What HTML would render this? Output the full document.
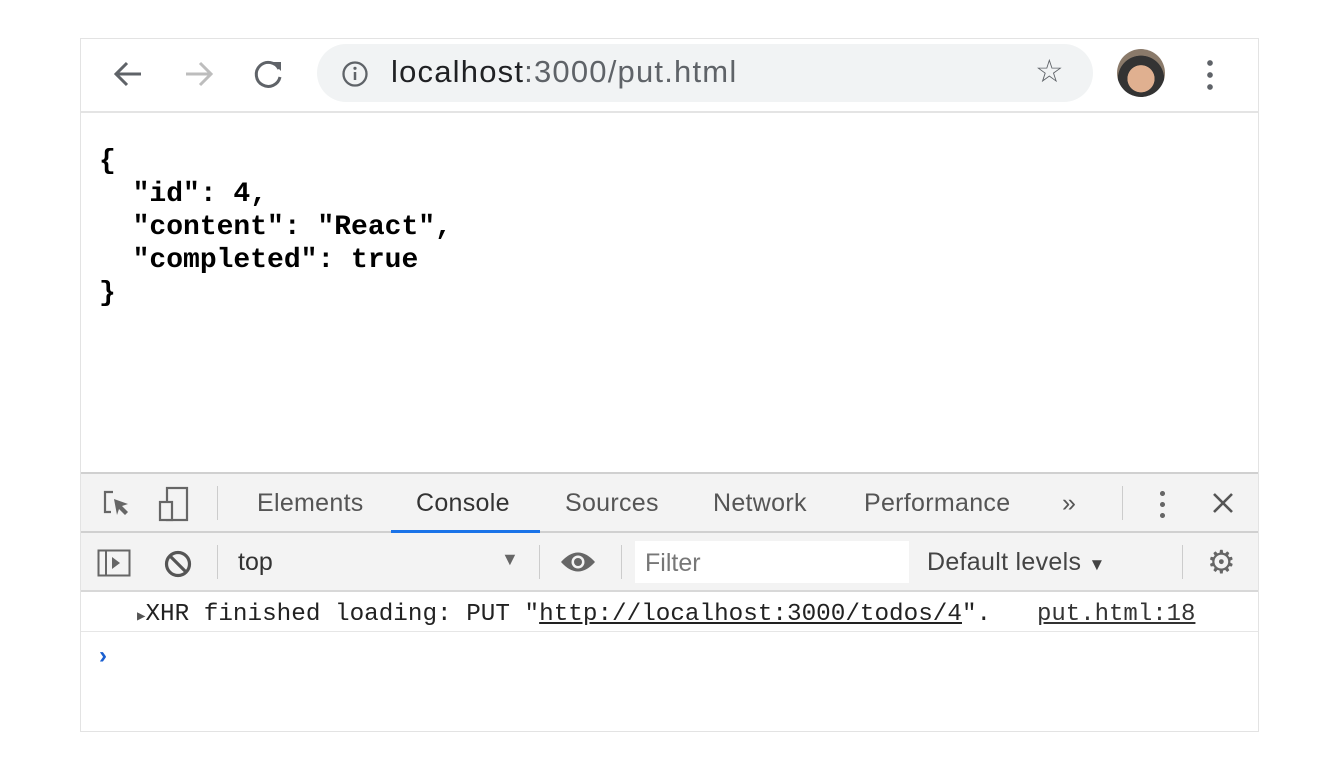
<!DOCTYPE html>
<html><head><style>
*{margin:0;padding:0;box-sizing:border-box}
body{width:1335px;height:763px;background:#fff;position:relative;font-family:"Liberation Sans",sans-serif;overflow:hidden}
.frame{position:absolute;left:80px;top:38px;width:1179px;height:694px;border:1px solid #e3e3e3}
.abs{position:absolute}
.tb{left:0;top:0;width:1177px;height:74px;border-bottom:2px solid #e4e4e4;background:#fff}
.url{left:236px;top:5px;width:776px;height:58px;border-radius:29px;background:#f1f3f4}
.mono{font-family:"Liberation Mono",monospace}
.dt{left:0;top:433px;width:1177px;height:259px;border-top:2px solid #d0d0d0}
.tabs{left:0;top:0;width:1177px;height:59px;background:#f3f3f3;border-bottom:2px solid #d0d0d0}
.tab{top:15px;font-size:25px;color:#555;letter-spacing:0.3px}
.bar2{left:0;top:59px;width:1177px;height:59px;background:#f3f3f3;border-bottom:2px solid #d8d8d8}
.sep{width:1px;background:#ccc}
</style></head><body>
<div class="frame">
 <div class="abs tb">
  <svg class="abs" style="left:30px;top:18px" width="34" height="34" viewBox="0 0 34 34"><path d="M30 17H6M16 6L5 17l11 11" stroke="#5f6368" stroke-width="3" fill="none"/></svg>
  <svg class="abs" style="left:101px;top:18px" width="34" height="34" viewBox="0 0 34 34"><path d="M4 17h24M18 6l11 11-11 11" stroke="#bdbdbd" stroke-width="3" fill="none"/></svg>
  <svg class="abs" style="left:171px;top:18px" width="34" height="34" viewBox="0 0 34 34"><path d="M27 12A12 12 0 1 0 28 20" stroke="#5f6368" stroke-width="3" fill="none"/><path d="M20 5h9v9z" fill="#5f6368"/></svg>
  <div class="abs url">
   <svg class="abs" style="left:24px;top:16px" width="28" height="28" viewBox="0 0 28 28"><circle cx="14" cy="14" r="11.5" stroke="#5f6368" stroke-width="2.3" fill="none"/><path d="M14 12v8" stroke="#5f6368" stroke-width="2.5"/><circle cx="14" cy="8.3" r="1.6" fill="#5f6368"/></svg>
   <div class="abs" style="left:74px;top:10px;font-size:31px;color:#202124;letter-spacing:1.2px">localhost<span style="color:#5f6368">:3000/put.html</span></div>
   <div class="abs" style="left:718px;top:8px;font-size:32px;color:#5f6368">☆</div>
  </div>
  <div class="abs" style="left:1036px;top:10px;width:48px;height:48px;border-radius:50%;background:radial-gradient(circle at 50% 62%,#e0b090 0 35%,#333 36% 60%,#8a7a6a 61%)"></div>
  <div class="abs" style="left:1126px;top:18px;width:6px;height:34px;background:radial-gradient(circle,#5f6368 2.6px,transparent 3px) 0 0/6px 12px"></div>
 </div>
 <pre class="abs mono" style="left:18px;top:106px;font-size:28px;line-height:33px;color:#000;font-weight:bold;font-family:'Liberation Mono',monospace">{
  "id": 4,
  "content": "React",
  "completed": true
}</pre>
 <div class="abs dt">
  <div class="abs tabs">
   <svg class="abs" style="left:20px;top:14px" width="32" height="32" viewBox="0 0 32 32"><path d="M12 4H4v20h6" stroke="#666" stroke-width="2.2" fill="none"/><path d="M13 11l14 5-6 2 6 6-3 3-6-6-2 6z" fill="#666"/></svg>
   <svg class="abs" style="left:76px;top:12px" width="34" height="36" viewBox="0 0 34 36"><rect x="10" y="2" width="20" height="32" stroke="#666" stroke-width="2.2" fill="none"/><rect x="3" y="16" width="12" height="18" stroke="#666" stroke-width="2.2" fill="#f3f3f3"/></svg>
   <div class="abs sep" style="left:136px;top:12px;height:34px"></div>
   <div class="abs tab" style="left:176px">Elements</div>
   <div class="abs tab" style="left:335px;color:#333">Console</div>
   <div class="abs" style="left:310px;top:56px;width:149px;height:3px;background:#1a73e8"></div>
   <div class="abs tab" style="left:484px">Sources</div>
   <div class="abs tab" style="left:632px">Network</div>
   <div class="abs tab" style="left:783px">Performance</div>
   <div class="abs tab" style="left:981px;color:#555">»</div>
   <div class="abs sep" style="left:1041px;top:12px;height:34px"></div>
   <div class="abs" style="left:1079px;top:14px;width:5px;height:32px;background:radial-gradient(circle,#666 2.3px,transparent 2.7px) 0 0/5px 11px"></div>
   <svg class="abs" style="left:1130px;top:17px" width="24" height="24" viewBox="0 0 24 24"><path d="M3 3l18 18M21 3L3 21" stroke="#555" stroke-width="2.6"/></svg>
  </div>
  <div class="abs bar2">
   <svg class="abs" style="left:16px;top:16px" width="34" height="28" viewBox="0 0 34 28"><rect x="1.5" y="1.5" width="31" height="25" stroke="#666" stroke-width="2" fill="none"/><path d="M9 2v24" stroke="#666" stroke-width="2"/><path d="M15 8l8 6-8 6z" fill="#666"/></svg>
   <svg class="abs" style="left:82px;top:16px" width="30" height="30" viewBox="0 0 30 30"><circle cx="15" cy="15" r="11.5" stroke="#555" stroke-width="3.2" fill="none"/><path d="M7 7l16 16" stroke="#555" stroke-width="3.2"/></svg>
   <div class="abs sep" style="left:136px;top:12px;height:34px"></div>
   <div class="abs" style="left:157px;top:15px;font-size:25px;color:#333">top</div>
   <div class="abs" style="left:420px;top:16px;font-size:18px;color:#666">▼</div>
   <div class="abs sep" style="left:458px;top:12px;height:34px"></div>
   <svg class="abs" style="left:478px;top:16px" width="38" height="26" viewBox="0 0 38 26"><path d="M2 13Q19-6 36 13Q19 32 2 13z" fill="#666"/><circle cx="19" cy="13" r="6.5" fill="#f3f3f3"/><circle cx="19" cy="13" r="4" fill="#666"/></svg>
   <div class="abs sep" style="left:540px;top:12px;height:34px"></div>
   <div class="abs" style="left:554px;top:8px;width:274px;height:42px;background:#fff"></div>
   <div class="abs" style="left:564px;top:16px;font-size:25px;color:#777">Filter</div>
   <div class="abs" style="left:846px;top:15px;font-size:25px;color:#444;letter-spacing:0.3px">Default levels <span style="font-size:17px">▼</span></div>
   <div class="abs sep" style="left:1101px;top:12px;height:34px"></div>
   <div class="abs" style="left:1126px;top:10px;font-size:32px;color:#666">⚙</div>
  </div>
  <div class="abs mono" style="left:56px;top:127px;font-size:24.3px;color:#222;white-space:pre"><span style="font-size:14px;color:#555">▶</span>XHR finished loading: PUT "<u>http://localhost:3000/todos/4</u>".</div>
  <div class="abs mono" style="left:956px;top:127px;font-size:24px;color:#333"><u>put.html:18</u></div>
  <div class="abs" style="left:0;top:157px;width:1177px;height:1px;background:#e6e6e6"></div>
  <div class="abs" style="left:18px;top:168px;font-size:24px;color:#1a5fd0;font-weight:bold">›</div>
 </div>
</div>
</body></html>
